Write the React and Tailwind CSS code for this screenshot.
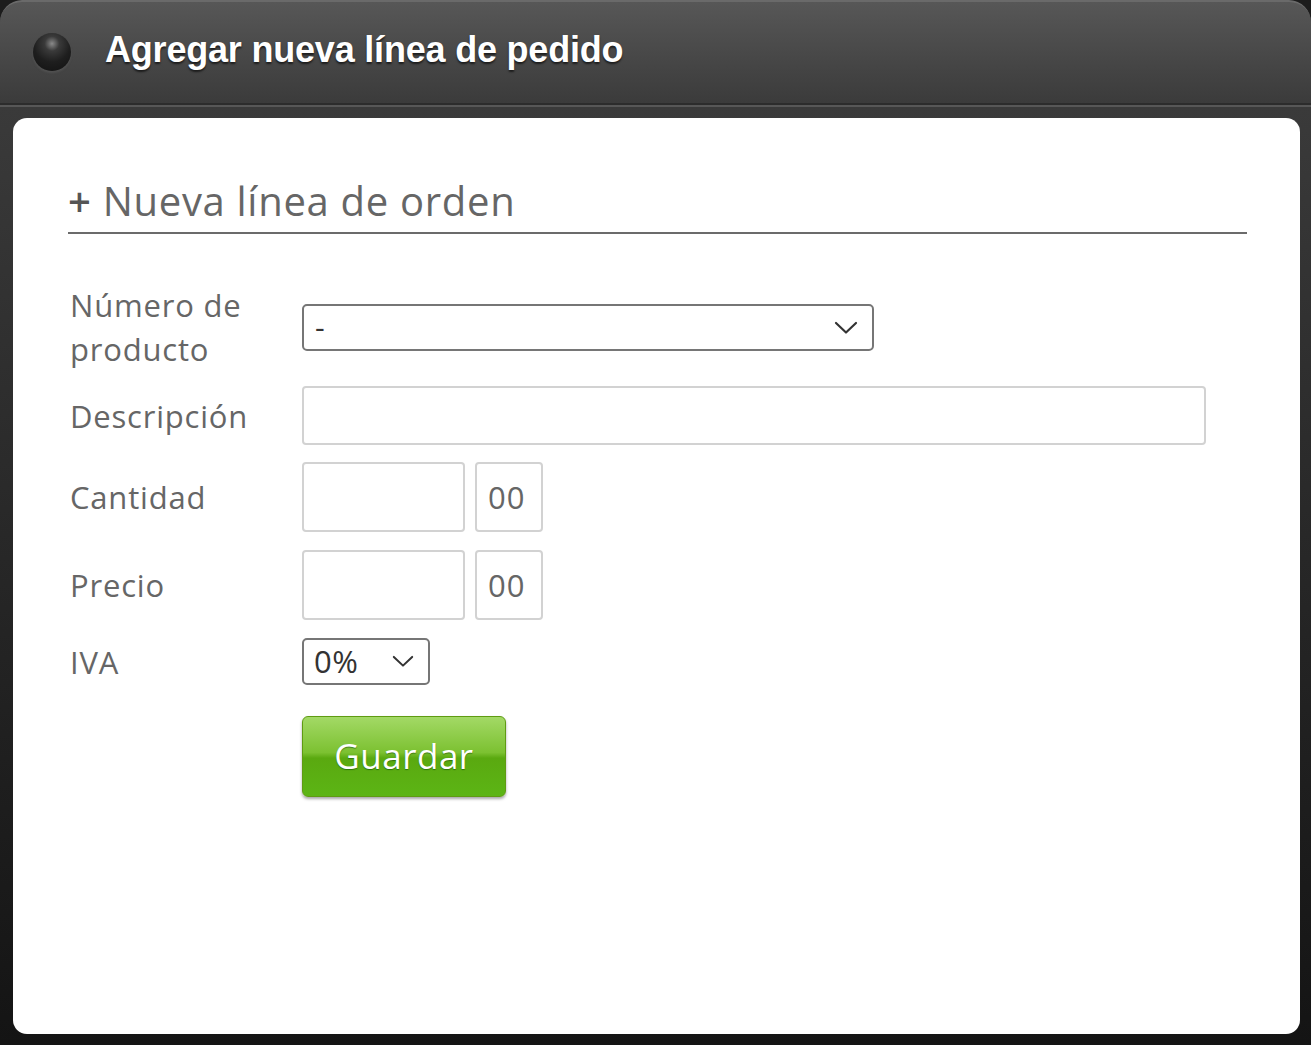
import React from 'react';

// Chevron used by the fake select boxes
function Chevron({ className }) {
  return (
    <svg viewBox="0 0 24 14" className={className} fill="none" stroke="#333" strokeWidth="2.2" strokeLinecap="round" strokeLinejoin="round">
      <path d="M2 2 L12 11.5 L22 2" />
    </svg>
  );
}

function Row({ label, children, className = '' }) {
  return (
    <div className={`flex items-center ${className}`}>
      <div className="w-[232px] shrink-0 text-[31px] leading-[44px] tracking-[0.8px] text-[#666]">{label}</div>
      {children}
    </div>
  );
}

function AmountInputs() {
  return (
    <div className="flex gap-[10px]">
      <div className="w-[163px] h-[70px] rounded-[4px] border-2 border-[#d2d2d2] bg-white" />
      <div className="w-[68px] h-[70px] rounded-[4px] border-2 border-[#d2d2d2] bg-white flex items-center px-[11px] text-[31px] tracking-[1px] text-[#666]">
        00
      </div>
    </div>
  );
}

export default function App() {
  return (
    <div className="w-[1311px] h-[1045px] bg-[#1c1c1c] font-['Open_Sans','Noto_Sans',sans-serif]">
      <div className="h-full flex flex-col rounded-t-[22px] bg-gradient-to-b from-[#3c3c3c] to-[#151515] overflow-hidden">
        {/* window title bar */}
        <div className="h-[103px] shrink-0 flex items-center rounded-t-[22px] border-t-2 border-[#6a6a6a] bg-gradient-to-b from-[#575757] to-[#3b3b3b] pl-[33px] pb-[2px]">
          <div className="w-[38px] h-[38px] rounded-full bg-[radial-gradient(circle_at_50%_28%,#8a8a8a_0%,#3a3a3a_22%,#1e1e1e_55%,#111_100%)] shadow-[0_2px_2px_rgba(90,90,90,0.6)]" />
          <h1 className="ml-[34px] -mt-[3px] text-[36px] font-bold text-white tracking-[-0.2px] font-['Liberation_Sans',Arial,sans-serif] [text-shadow:0_2px_2px_rgba(0,0,0,0.6)]">
            Agregar nueva línea de pedido
          </h1>
        </div>
        <div className="h-[2px] bg-[#2c2c2c]" />
        <div className="h-[2px] bg-[#575757]" />

        <div className="flex-1 flex flex-col pt-[11px] pl-[13px] pr-[11px] pb-[11px] bg-gradient-to-b from-[#3a3a3a] to-[#141414]">
          <div className="flex-1 bg-white rounded-[14px] pt-[56px] pl-[55px] pr-[53px]">
            <h2 className="text-[40px] leading-[54px] tracking-[0.7px] text-[#666] pb-[4px] border-b-2 border-[#6b6b6b]">
              <span className="font-semibold text-[#555]">+</span> Nueva línea de orden
            </h2>

            <div className="flex flex-col pl-[2px] mt-[49px]">
              <div className="flex items-start">
                <div className="w-[232px] shrink-0 text-[31px] leading-[44px] tracking-[0.8px] text-[#666]">
                  Número de
                  <br />
                  producto
                </div>
                <div className="mt-[21px] w-[572px] h-[47px] rounded-[5px] border-2 border-[#767676] flex items-center justify-between pl-[11px] pr-[14px] text-[30px] text-[#333]">
                  <span className="leading-none -mt-[2px]">-</span>
                  <Chevron className="w-[24px] h-[14px]" />
                </div>
              </div>

              <Row label="Descripción" className="mt-[15px]">
                <div className="w-[904px] h-[59px] rounded-[4px] border-2 border-[#d2d2d2] bg-white" />
              </Row>

              <Row label="Cantidad" className="mt-[17px]">
                <AmountInputs />
              </Row>

              <Row label="Precio" className="mt-[18px]">
                <AmountInputs />
              </Row>

              <Row label="IVA" className="mt-[18px]">
                <div className="w-[128px] h-[47px] rounded-[5px] border-2 border-[#767676] flex items-center justify-between pl-[10px] pr-[14px] text-[31px] tracking-[0.6px] text-[#333]">
                  <span>0%</span>
                  <Chevron className="w-[22px] h-[13px]" />
                </div>
              </Row>

              <div className="mt-[31px] ml-[232px]">
                <button className="w-[204px] h-[81px] rounded-[6px] border border-[#5f9b12] bg-[linear-gradient(to_bottom,#a3d966_0%,#7cc131_45%,#5aa910_52%,#5cb515_100%)] shadow-[0_2px_3px_rgba(0,0,0,0.35)] text-white text-[35px] tracking-[0.5px] [text-shadow:0_1px_1px_rgba(0,60,0,0.5)]">
                  Guardar
                </button>
              </div>
            </div>
          </div>
        </div>
      </div>
    </div>
  );
}
